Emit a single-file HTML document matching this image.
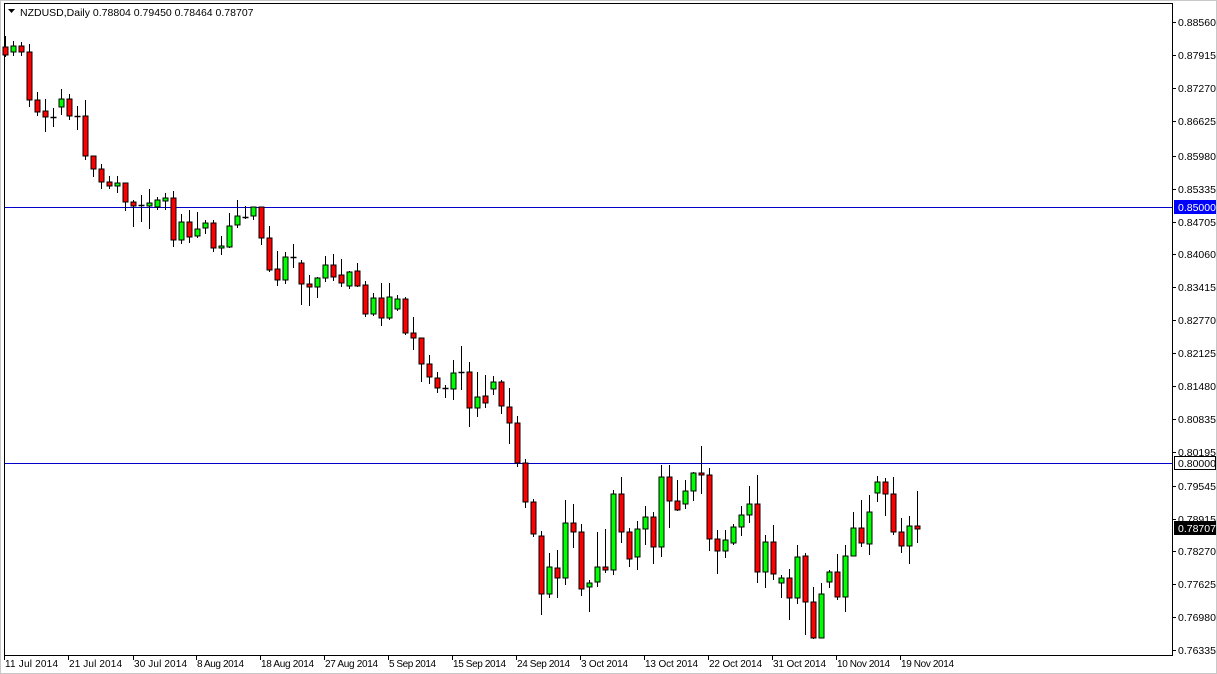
<!DOCTYPE html>
<html><head><meta charset="utf-8"><style>
html,body{margin:0;padding:0;background:#fff;}
body{width:1217px;height:674px;overflow:hidden;position:relative;font-family:"Liberation Sans",Tahoma,sans-serif;}
</style></head><body>
<svg id="s" width="1217" height="674" xmlns="http://www.w3.org/2000/svg" style="position:absolute;left:0;top:0" font-family="Liberation Sans, sans-serif" font-size="10.5">
<rect x="0" y="0" width="1217" height="674" fill="#fff"/>
<rect x="0.5" y="0.5" width="1216" height="673" fill="none" stroke="#c8c8c8"/>
<rect x="4.5" y="3.5" width="1168" height="652" fill="#fff" stroke="#000"/>
<line x1="5" y1="207.5" x2="1172" y2="207.5" stroke="#0000c8"/>
<line x1="5" y1="463.5" x2="1172" y2="463.5" stroke="#0000c8"/>
<g id="c"></g>
<polygon points="8,9 15,9 11.5,13" fill="#000"/>
<text x="20" y="16" fill="#000" font-size="10.5">NZDUSD,Daily  0.78804 0.79450 0.78464 0.78707</text>
<g id="ax" fill="#000"></g>
</svg>
<script>
var d=[
[47,55,36,57,0],[52,46,41,56,1],[46,52,42,56,0],[52,100,44,107,0],[100,112,92,116,0],[111,117,99,132,0],[117,117,108,127,2],[107,99,89,115,1],[99,116,94,120,0],[116,116,106,130,2],
[116,156,100,160,0],[156,169,156,177,0],[169,182,164,189,0],[182,186,176,189,0],[186,183,176,193,1],[183,202,183,211,0],[202,206,200,227,0],[205,205,195,222,2],[206,203,189,229,1],[207,200,197,210,1],
[201,198,193,210,1],[198,240,191,247,0],[240,222,214,244,1],[222,237,210,243,0],[236,229,212,238,1],[228,223,220,234,1],[223,248,220,252,0],[248,246,236,255,1],[247,226,213,248,1],[225,216,200,228,1],
[217,217,206,219,2],[216,207,207,220,1],[207,238,207,245,0],[238,270,226,272,0],[269,280,251,286,0],[280,257,252,284,1],[257,257,244,268,2],[263,284,260,305,0],[284,287,275,306,0],[287,278,277,298,1],
[278,265,256,282,1],[265,277,254,281,0],[275,283,259,287,0],[286,272,271,289,1],[271,286,263,287,0],[285,314,281,317,0],[314,298,293,316,1],[298,318,283,326,0],[318,297,283,320,1],[309,299,295,311,1],
[299,333,297,335,0],[333,338,317,350,0],[338,364,338,382,0],[364,377,355,384,0],[378,388,372,393,0],[388,388,385,398,2],[389,373,360,400,1],[372,372,346,390,2],[372,408,362,427,0],[408,397,372,417,1],
[396,403,375,408,0],[389,382,376,395,1],[382,406,380,414,0],[407,423,388,444,0],[423,463,416,467,0],[463,502,459,508,0],[502,534,499,537,0],[536,594,531,615,0],[594,567,553,598,1],[568,578,550,598,0],
[578,523,500,585,1],[523,532,504,548,0],[532,589,524,596,0],[587,583,580,612,1],[582,567,532,587,1],[567,570,529,573,0],[570,494,490,575,1],[494,532,477,543,0],[532,559,528,567,0],[557,529,521,570,1],
[529,517,506,545,1],[517,547,512,564,0],[547,477,465,557,1],[477,501,465,528,0],[501,510,480,511,0],[504,491,480,509,1],[491,473,472,501,1],[473,475,446,494,0],[475,539,468,551,0],[539,551,530,574,0],
[551,540,530,558,1],[543,527,524,545,1],[527,515,506,536,1],[515,504,486,523,1],[504,572,475,583,0],[572,542,535,588,1],[542,574,525,580,0],[583,578,575,598,1],[578,598,569,620,0],[598,557,545,604,1],
[556,602,553,635,0],[602,638,587,639,0],[638,594,583,638,1],[582,572,570,588,1],[572,597,554,600,0],[597,556,545,612,1],[556,528,512,556,1],[528,543,500,547,0],[544,512,495,555,1],[493,482,476,502,1],
[482,494,478,516,0],[494,532,477,535,0],[532,546,518,553,0],[546,526,516,564,1],[526,529,491,543,0]];
var h='';
for(var i=0;i<d.length;i++){var c=d[i],x=5.5+8*i;
h+='<line x1="'+x+'" y1="'+c[2]+'" x2="'+x+'" y2="'+c[3]+'" stroke="#000"/>';
var t=Math.min(c[0],c[1]),b=Math.max(c[0],c[1]);
if(c[4]==2||b-t<1){h+='<line x1="'+(x-3)+'" y1="'+(t+.5)+'" x2="'+(x+3)+'" y2="'+(t+.5)+'" stroke="#000" stroke-width="1.5"/>';}
else h+='<rect x="'+(x-2.5)+'" y="'+t+'" width="5" height="'+(b-t)+'" fill="'+(c[4]?'#00ff00':'#ff0000')+'" stroke="#000"/>';}
document.getElementById('c').innerHTML=h;
var p=[["0.88560",22],["0.87915",55],["0.87270",88],["0.86625",121],["0.85980",156],["0.85335",189],["0.84705",222],["0.84060",254],["0.83415",287],["0.82770",320],["0.82125",353],["0.81480",386],["0.80835",419],["0.80195",452],["0.79545",486],["0.78915",519],["0.78270",551],["0.77625",584],["0.76980",617],["0.76335",650]];
var a='';
p.forEach(function(q){a+='<line x1="1172" y1="'+(q[1]+.5)+'" x2="1176" y2="'+(q[1]+.5)+'" stroke="#000"/><text x="1178" y="'+(q[1]+4)+'">'+q[0]+'</text>';});
a+='<rect x="1174" y="200" width="42" height="14" fill="#0000ff"/><text x="1178" y="211" fill="#fff">0.85000</text>';
a+='<rect x="1174.5" y="456.5" width="41" height="13" fill="#fff" stroke="#000"/><text x="1178" y="467">0.80000</text>';
a+='<rect x="1174" y="521" width="42" height="14" fill="#000"/><text x="1178" y="532" fill="#fff">0.78707</text>';
var dt=[["11 Jul 2014",4],["21 Jul 2014",68],["30 Jul 2014",133],["8 Aug 2014",196],["18 Aug 2014",260],["27 Aug 2014",324],["5 Sep 2014",388],["15 Sep 2014",452],["24 Sep 2014",516],["3 Oct 2014",580],["13 Oct 2014",644],["22 Oct 2014",708],["31 Oct 2014",772],["10 Nov 2014",836],["19 Nov 2014",900]];
dt.forEach(function(q){a+='<line x1="'+(q[1]+.5)+'" y1="656" x2="'+(q[1]+.5)+'" y2="660" stroke="#000"/><text x="'+(q[1]+1)+'" y="667" font-size="10" textLength="'+(q[0].length>10?53:47)+'">'+q[0]+'</text>';});
document.getElementById('ax').innerHTML=a;
</script>
</body></html>
